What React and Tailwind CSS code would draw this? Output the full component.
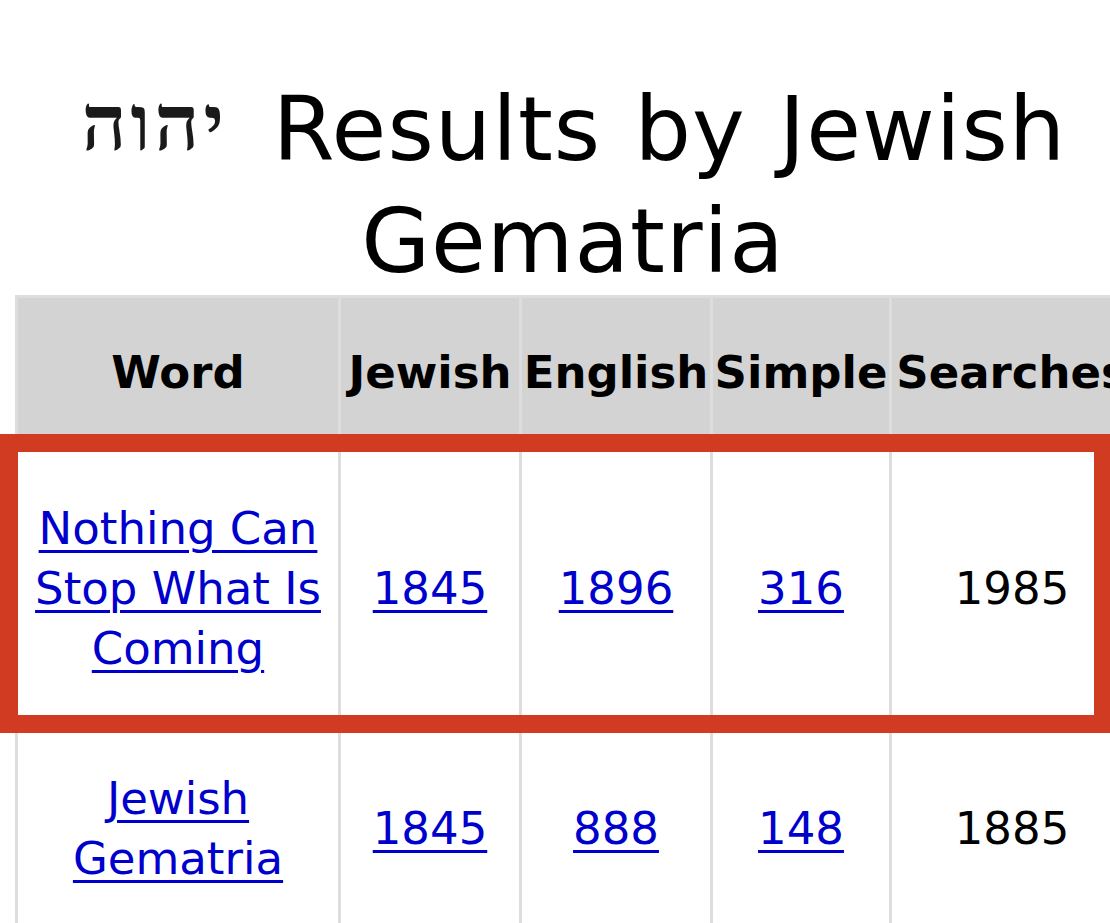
export default function App() {
  const font = { fontFamily: '"DejaVu Sans", Verdana, sans-serif' };
  const link = "text-[#0000cc] underline decoration-[3px] underline-offset-[6px]";
  const td = "border-[3px] border-[#dddddd] text-center align-middle px-[4px]";
  const th = "border-[3px] border-[#dddddd] text-center align-middle px-0 text-[45px] font-bold";
  return (
    <div className="w-[1110px] h-[923px] overflow-hidden bg-white" style={font}>
      <div className="w-[1146px]">
        <h1 className="pt-[73px] text-center text-[89px] leading-[112px] font-normal text-black tracking-[1px] [word-spacing:4px]">
          <span
            className="inline-block w-[150px] text-center text-[78px] leading-none font-bold tracking-[4px] align-[10px] mr-[43px] blur-[0.7px] text-[#1a1a1a] [word-spacing:0px]"
            style={{ fontFamily: '"Liberation Serif", "DejaVu Sans", serif' }}
            dir="rtl"
          >
            יהוה
          </span>
          Results by Jewish Gematria
        </h1>
        <div className="relative ml-[15px] -mt-[2px]">
          <table className="table-fixed border-collapse w-[1117px] text-[45px] leading-[60px] text-black">
            <colgroup>
              <col className="w-[323px]" />
              <col className="w-[181px]" />
              <col className="w-[191px]" />
              <col className="w-[179px]" />
              <col className="w-[243px]" />
            </colgroup>
            <thead>
              <tr className="h-[152px] bg-[#d3d3d3]">
                <th className={th}>Word</th>
                <th className={th}>Jewish</th>
                <th className={th}>English</th>
                <th className={th}>Simple</th>
                <th className={th}>Searches</th>
              </tr>
            </thead>
            <tbody>
              <tr className="h-[280px]">
                <td className={td}>
                  <a href="#" className={link}>Nothing Can Stop What Is Coming</a>
                </td>
                <td className={td}><a href="#" className={link}>1845</a></td>
                <td className={td}><a href="#" className={link}>1896</a></td>
                <td className={td}><a href="#" className={link}>316</a></td>
                <td className={td}>1985</td>
              </tr>
              <tr className="h-[200px]">
                <td className={td}>
                  <a href="#" className={link}>Jewish Gematria</a>
                </td>
                <td className={td}><a href="#" className={link}>1845</a></td>
                <td className={td}><a href="#" className={link}>888</a></td>
                <td className={td}><a href="#" className={link}>148</a></td>
                <td className={td}>1885</td>
              </tr>
            </tbody>
          </table>
          <div className="absolute left-[-15px] top-[139px] w-[1112px] h-[299px] border-[18px] border-[#d13b21] pointer-events-none" />
        </div>
      </div>
    </div>
  );
}
